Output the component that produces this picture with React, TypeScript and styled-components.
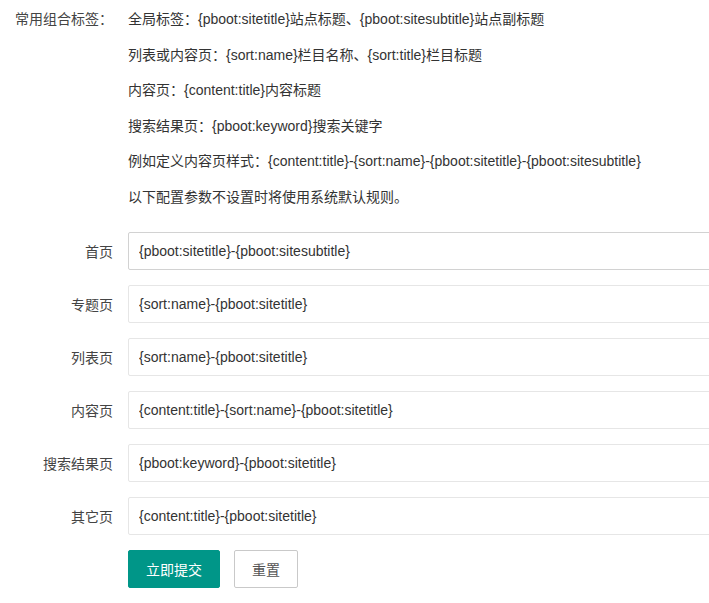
import React from 'react';
import styled, { createGlobalStyle } from "styled-components";

const GlobalStyle = createGlobalStyle`
    html, body {
        margin: 0;
        padding: 0;
        background: #fff;
    }
    body {
        font: 14px "Liberation Sans", "Noto Sans CJK SC", sans-serif;
        color: #333;
    }
`

type FieldType = {
    label: string
    value: string
    hover?: boolean
}

const tips = [
    '全局标签：{pboot:sitetitle}站点标题、{pboot:sitesubtitle}站点副标题',
    '列表或内容页：{sort:name}栏目名称、{sort:title}栏目标题',
    '内容页：{content:title}内容标题',
    '搜索结果页：{pboot:keyword}搜索关键字',
    '例如定义内容页样式：{content:title}-{sort:name}-{pboot:sitetitle}-{pboot:sitesubtitle}',
    '以下配置参数不设置时将使用系统默认规则。',
]

const fields: FieldType[] = [
    {label: '首页', value: '{pboot:sitetitle}-{pboot:sitesubtitle}', hover: true},
    {label: '专题页', value: '{sort:name}-{pboot:sitetitle}'},
    {label: '列表页', value: '{sort:name}-{pboot:sitetitle}'},
    {label: '内容页', value: '{content:title}-{sort:name}-{pboot:sitetitle}'},
    {label: '搜索结果页', value: '{pboot:keyword}-{pboot:sitetitle}'},
    {label: '其它页', value: '{content:title}-{pboot:sitetitle}'},
]

const App = () => {
    return (
        <Page>
            <GlobalStyle/>
            <Form>
                <TipItem>
                    <TipLabel>常用组合标签：</TipLabel>
                    <TipList>
                        {tips.map(t => <Tip key={t}>{t}</Tip>)}
                    </TipList>
                </TipItem>
                {fields.map(f => (
                    <Item key={f.label}>
                        <Label>{f.label}</Label>
                        <Input defaultValue={f.value} $hover={f.hover}/>
                    </Item>
                ))}
                <Buttons>
                    <Button $primary>立即提交</Button>
                    <Button>重置</Button>
                </Buttons>
            </Form>
        </Page>
    );
};

export default App;

const Page = styled.div`
    width: 100%;
    overflow: hidden;
`

const Form = styled.form`
    width: 780px;
    padding-top: 2px;
`

const TipItem = styled.div`
    display: flex;
    margin-bottom: 16px;
`

const TipLabel = styled.div`
    width: 128px;
    padding-right: 15px;
    box-sizing: border-box;
    text-align: right;
    line-height: 35.6px;
    color: #444;
    white-space: nowrap;
`

const TipList = styled.div`
    display: flex;
    flex-direction: column;
`

const Tip = styled.div`
    line-height: 35.6px;
    white-space: nowrap;
`

const Item = styled.div`
    display: flex;
    align-items: center;
    margin-bottom: 15px;
`

const Label = styled.label`
    width: 128px;
    padding-right: 15px;
    box-sizing: border-box;
    text-align: right;
    color: #444;
`

const Input = styled.input<{ $hover?: boolean }>`
    flex: 1;
    height: 38px;
    box-sizing: border-box;
    border: 1px solid ${p => p.$hover ? '#d2d2d2' : '#e6e6e6'};
    border-radius: 2px;
    padding: 0 10px;
    font: 14px "Liberation Sans", "Noto Sans CJK SC", sans-serif;
    color: #333;
    background: #fff;
    outline: none;
`

const Buttons = styled.div`
    display: flex;
    gap: 14px;
    padding-left: 128px;
`

const Button = styled.button<{ $primary?: boolean }>`
    height: 38px;
    padding: 0 17px;
    border-radius: 2px;
    font: 14px "Liberation Sans", "Noto Sans CJK SC", sans-serif;
    border: 1px solid ${p => p.$primary ? '#009688' : '#c9c9c9'};
    background: ${p => p.$primary ? '#009688' : '#fff'};
    color: ${p => p.$primary ? '#fff' : '#555'};
    cursor: pointer;
`
